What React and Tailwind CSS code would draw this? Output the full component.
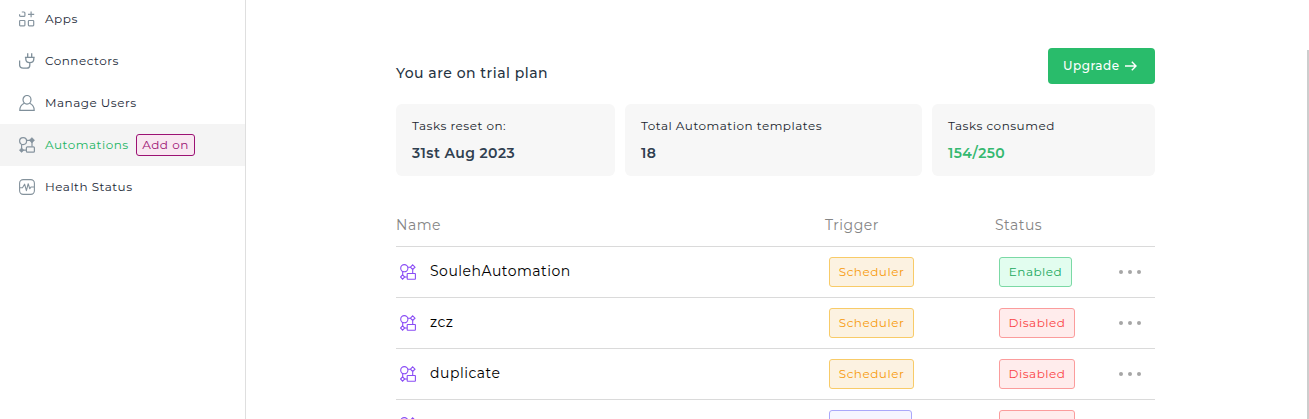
import React from "react";

function AppsIcon() {
  return (
    <svg width="16" height="16" viewBox="0 0 16 16" fill="none" stroke="#8795a0" strokeWidth="1.2">
      <path d="M2.8 1H4.9Q5.9 1 5.9 2V4.4Q5.9 5.4 4.9 5.4H1.6Q.6 5.4 .6 4.4V3.2" />
      <rect x="0.6" y="9.5" width="5.3" height="5.3" rx="0.7" />
      <rect x="9.4" y="9.5" width="5.3" height="5.3" rx="0.7" />
      <path d="M12.1 .5V6.3M9 3.4H15.2" />
    </svg>
  );
}

function PlugIcon() {
  return (
    <svg width="16" height="16" viewBox="0 0 16 16" fill="none" stroke="#7f8f9a" strokeWidth="1.3">
      <path d="M8.7 .2V4M12.7 .2V4M5.9 4.3H15.7M6.8 4.3V6Q6.8 9.6 10.8 9.6Q14.8 9.6 14.8 6V4.3M10.8 9.6V12.2Q10.8 15.2 7.8 15.2H4.2Q.6 15.2 .6 11.6V7.6" />
    </svg>
  );
}

function UserIcon() {
  return (
    <svg width="16" height="16" viewBox="0 0 16 16" fill="none" stroke="#7f8f9a" strokeWidth="1.2">
      <ellipse cx="8" cy="4.8" rx="4" ry="4.3" />
      <path d="M5.4 8.3C2.4 9.5 .8 12 .8 15.4H15.2C15.2 12 13.6 9.5 10.6 8.3" />
    </svg>
  );
}

function FlowFilledIcon() {
  return (
    <svg width="16" height="16" viewBox="0 0 16 16" fill="none" stroke="#85939e" strokeWidth="1.2">
      <circle cx="4.1" cy="4.1" r="3.5" />
      <path d="M7.6 3.4H11M13 5V9.5M2.6 7.2V12M4 13.2H7.5" />
      <path d="M12.9 .6L15.6 3.3L12.9 6L10.2 3.3ZM2.6 10.9L4.9 13.2L2.6 15.5L.3 13.2Z" fill="#85939e" strokeWidth="0.5" />
      <rect x="7.4" y="9.8" width="8" height="5.4" rx="1" />
    </svg>
  );
}

function HealthIcon() {
  return (
    <svg width="16" height="16" viewBox="0 0 16 16" fill="none" stroke="#84929c" strokeWidth="1.1">
      <rect x="0.6" y="0.6" width="14.8" height="14.8" rx="3.6" />
      <path d="M.8 8.8H3.5L5.6 5.2L7.4 11.6L9.2 4.7L10.8 9.8L12 8H15.2" strokeLinejoin="round" />
    </svg>
  );
}

function FlowIcon() {
  return (
    <svg width="16" height="16" viewBox="0 0 16 16" fill="none" stroke="#8a4df5" strokeWidth="1.1">
      <circle cx="4.3" cy="4.2" r="3.6" />
      <path d="M7.9 3.3H10.2M12.7 5.6V9.4M2.7 7.5V11.2M4.5 13H7.2" />
      <path d="M12.7 .9L15 3.2L12.7 5.5L10.4 3.2ZM2.6 10.9L4.7 13L2.6 15.1L.5 13Z" />
      <rect x="7.2" y="9.5" width="8.2" height="5.7" rx="0.4" />
    </svg>
  );
}

const navItems = [
  { label: "Apps", icon: AppsIcon },
  { label: "Connectors", icon: PlugIcon },
  { label: "Manage Users", icon: UserIcon },
  { label: "Automations", icon: FlowFilledIcon, active: true },
  { label: "Health Status", icon: HealthIcon },
];

const rows = [
  { id: 1, name: "SoulehAutomation", trigger: "Scheduler", status: "Enabled" },
  { id: 2, name: "zcz", trigger: "Scheduler", status: "Disabled" },
  { id: 3, name: "duplicate", trigger: "Scheduler", status: "Disabled" },
  { id: 4 },
];

function Sidebar() {
  return (
    <nav className="h-[419px] w-[246px] shrink-0 border-r border-[#dfdfdf]">
      <ul className="-mt-0.5">
        {navItems.map(({ label, icon: Icon, active }) => (
          <li
            key={label}
            className={`flex h-[42px] items-center pl-[19px] text-xs ${
              active ? "bg-[#f4f4f4] text-[#22b463]" : "text-[#1b2937]"
            }`}
          >
            <Icon />
            <span className="ml-2.5 whitespace-nowrap">{label}</span>
            {active && (
              <span className="ml-auto mr-[50px] flex h-[22px] w-[59px] items-center justify-center whitespace-nowrap rounded-[3px] border border-[#9c1173] bg-[#f8e8f1] text-[#9c1173]">
                Add on
              </span>
            )}
          </li>
        ))}
      </ul>
    </nav>
  );
}

function StatCard({ label, value, width, valueColor }) {
  return (
    <div className={`h-[72px] rounded-md bg-[#f7f7f7] px-4 pt-3 ${width}`}>
      <div className="whitespace-nowrap text-xs leading-5 text-[#20262e]">{label}</div>
      <div className={`mt-[7px] whitespace-nowrap text-sm font-semibold leading-5 tracking-[0.4px] ${valueColor}`}>
        {value}
      </div>
    </div>
  );
}

const badge = "flex h-[30px] items-center justify-center whitespace-nowrap rounded-[3px] border text-xs";

function Row({ row }) {
  return (
    <div className="flex h-[51px] items-center border-b border-[#dadada]">
      <div className="flex w-[433px] items-center pl-1">
        <FlowIcon />
        <span className="ml-3.5 -mt-0.5 text-sm text-black">{row.name}</span>
      </div>
      <div className="w-[170px]">
        {row.trigger ? (
          <span className={`${badge} w-[85px] border-[#f8cb68] bg-[#fcf2e1] text-[#f79a0c]`}>{row.trigger}</span>
        ) : (
          <span className={`${badge} w-[83px] border-[#aaa8fa] bg-[#f5f5ff]`} />
        )}
      </div>
      <div className="w-[120px]">
        {row.status === "Enabled" ? (
          <span className={`${badge} w-[73px] border-[#7bd9a5] bg-[#e2fdef] text-[#20a85e]`}>{row.status}</span>
        ) : (
          <span className={`${badge} w-[76px] border-[#fb9c9c] bg-[#ffecec] text-[#fa4444]`}>{row.status}</span>
        )}
      </div>
      <svg width="22" height="4" viewBox="0 0 22 4" fill="#a6a6a6">
        <circle cx="2" cy="2" r="2" />
        <circle cx="11" cy="2" r="2" />
        <circle cx="20" cy="2" r="2" />
      </svg>
    </div>
  );
}

export default function App() {
  return (
    <div className="flex h-[419px] w-[1309px] overflow-hidden bg-white font-['Montserrat','Inter',sans-serif] tracking-[0.5px]">
      <Sidebar />
      <main className="ml-[150px] w-[759px] shrink-0 pt-12">
        <header className="flex h-9 items-start justify-between">
          <h1 className="mt-[15px] whitespace-nowrap text-sm font-medium leading-5 text-[#253342]">
            You are on trial plan
          </h1>
          <button className="flex h-9 w-[107px] items-center rounded bg-[#29bc6b] pl-[15px] text-xs font-medium tracking-[0.5px] text-white">
            <span className="w-[62px] whitespace-nowrap text-left">Upgrade</span>
            <svg width="12" height="10" viewBox="0 0 12 10" fill="none" stroke="white" strokeWidth="1.4">
              <path d="M0 5H11M6.8 .8L11 5L6.8 9.2" />
            </svg>
          </button>
        </header>
        <section className="mt-5 flex gap-2.5">
          <StatCard label="Tasks reset on:" value="31st Aug 2023" width="w-[219px]" valueColor="text-[#304050]" />
          <StatCard label="Total Automation templates" value="18" width="w-[297px]" valueColor="text-[#304050]" />
          <StatCard label="Tasks consumed" value="154/250" width="w-[223px]" valueColor="text-[#35b970]" />
        </section>
        <section className="mt-7">
          <div className="flex h-[43px] border-b border-[#dadada] pt-[11px] text-sm leading-5 text-[#858585]">
            <div className="w-[429px]">Name</div>
            <div className="w-[170px]">Trigger</div>
            <div>Status</div>
          </div>
          {rows.map((row) => (
            <Row key={row.id} row={row} />
          ))}
        </section>
      </main>
      <div className="ml-auto mt-[50px] h-[369px] w-0.5 bg-[#cdcdcd]" />
    </div>
  );
}
